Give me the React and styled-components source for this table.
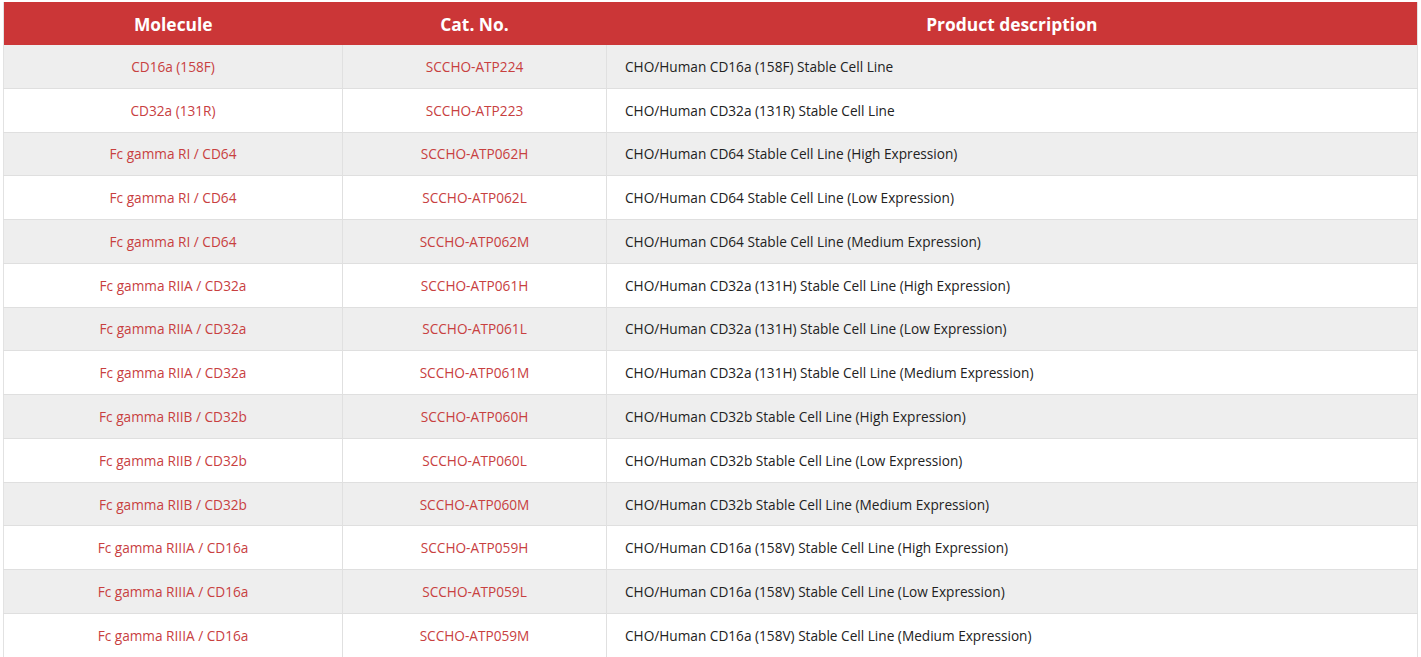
import React from "react";
import styled, { createGlobalStyle } from "styled-components";

const rows = [
  ["CD16a (158F)", "SCCHO-ATP224", "CHO/Human CD16a (158F) Stable Cell Line"],
  ["CD32a (131R)", "SCCHO-ATP223", "CHO/Human CD32a (131R) Stable Cell Line"],
  ["Fc gamma RI / CD64", "SCCHO-ATP062H", "CHO/Human CD64 Stable Cell Line (High Expression)"],
  ["Fc gamma RI / CD64", "SCCHO-ATP062L", "CHO/Human CD64 Stable Cell Line (Low Expression)"],
  ["Fc gamma RI / CD64", "SCCHO-ATP062M", "CHO/Human CD64 Stable Cell Line (Medium Expression)"],
  ["Fc gamma RIIA / CD32a", "SCCHO-ATP061H", "CHO/Human CD32a (131H) Stable Cell Line (High Expression)"],
  ["Fc gamma RIIA / CD32a", "SCCHO-ATP061L", "CHO/Human CD32a (131H) Stable Cell Line (Low Expression)"],
  ["Fc gamma RIIA / CD32a", "SCCHO-ATP061M", "CHO/Human CD32a (131H) Stable Cell Line (Medium Expression)"],
  ["Fc gamma RIIB / CD32b", "SCCHO-ATP060H", "CHO/Human CD32b Stable Cell Line (High Expression)"],
  ["Fc gamma RIIB / CD32b", "SCCHO-ATP060L", "CHO/Human CD32b Stable Cell Line (Low Expression)"],
  ["Fc gamma RIIB / CD32b", "SCCHO-ATP060M", "CHO/Human CD32b Stable Cell Line (Medium Expression)"],
  ["Fc gamma RIIIA / CD16a", "SCCHO-ATP059H", "CHO/Human CD16a (158V) Stable Cell Line (High Expression)"],
  ["Fc gamma RIIIA / CD16a", "SCCHO-ATP059L", "CHO/Human CD16a (158V) Stable Cell Line (Low Expression)"],
  ["Fc gamma RIIIA / CD16a", "SCCHO-ATP059M", "CHO/Human CD16a (158V) Stable Cell Line (Medium Expression)"],
];

export default function App() {
  return (
    <Page>
      <Global />
      <Table>
        <colgroup>
          <col style={{ width: 339 }} />
          <col style={{ width: 264 }} />
          <col />
        </colgroup>
        <thead>
          <tr>
            <Th>Molecule</Th>
            <Th>Cat. No.</Th>
            <Th>Product description</Th>
          </tr>
        </thead>
        <tbody>
          {rows.map((r, i) => (
            <Tr key={i} $odd={i % 2 === 0}>
              <Td $link>{r[0]}</Td>
              <Td $link>{r[1]}</Td>
              <Td $left>{r[2]}</Td>
            </Tr>
          ))}
        </tbody>
      </Table>
    </Page>
  );
}

const Global = createGlobalStyle`
  body {
    margin: 0;
    background: #fff;
    font-family: "Open Sans", "Noto Sans", Arial, sans-serif;
  }
`;

const Page = styled.div`
  padding: 2px 3px 0 3px;
`;

const Table = styled.table`
  width: 1415px;
  border-collapse: collapse;
  table-layout: fixed;
  border-left: 1px solid #e2e2e2;
  border-right: 1px solid #e2e2e2;
  border-bottom: 2px solid #e2e2e2;
`;

const Th = styled.th`
  height: 43px;
  padding: 0;
  background: #cb3637;
  color: #fff;
  font-size: 17.4px;
  font-weight: 700;
  text-align: center;
  vertical-align: middle;
`;

const Tr = styled.tr`
  background: ${(p) => (p.$odd ? "#eeeeee" : "#ffffff")};
  border-top: 1px solid #dfdfdf;
  &:first-child {
    border-top: none;
  }
`;

const Td = styled.td`
  height: 42.77px;
  padding: 0;
  padding-left: ${(p) => (p.$left ? "18px" : "0")};
  border-left: 1px solid #e0e0e0;
  font-size: 13.65px;
  color: ${(p) => (p.$link ? "#c8403f" : "#222")};
  text-align: ${(p) => (p.$left ? "left" : "center")};
  vertical-align: middle;
  &:first-child {
    border-left: none;
  }
`;
